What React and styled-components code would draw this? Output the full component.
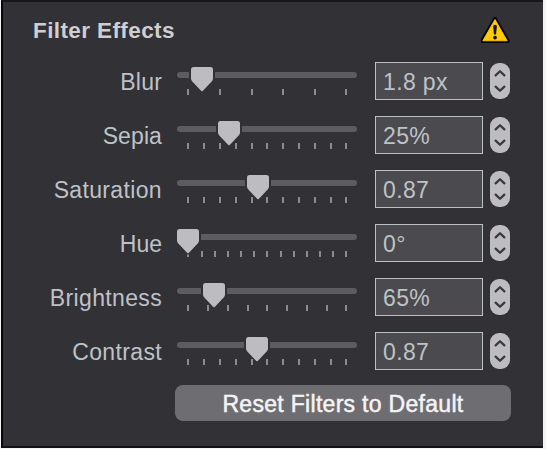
import React from "react";
import styled, { createGlobalStyle } from "styled-components";

const GlobalStyle = createGlobalStyle`
  * { box-sizing: border-box; }
  body { margin: 0; background: #f4f3f4; }
`;

const Panel = styled.section`
  width: 542px;
  height: 448px;
  margin-left: 1px;
  padding: 0 32px 0 30px;
  border: solid #08080c;
  border-width: 2px 0 2px 2px;
  border-top-color: #18171a;
  border-bottom-color: #131214;
  background: #323136;
  font: 23px/26px "Liberation Sans", Arial, sans-serif;
  color: #bec2c7;
`;

const Header = styled.header`
  display: flex;
  justify-content: space-between;
  height: 52px;
  padding-top: 14px;
`;

const Title = styled.h2`
  margin: 2px 0 0;
  font-size: 22.5px;
  line-height: 26px;
  letter-spacing: 0.4px;
  color: #cfcfd1;
`;

const WarningIcon = styled.svg`
  width: 30px;
  height: 28px;
`;

const Row = styled.div`
  display: grid;
  grid-template-columns: 130px 180px 108px 20px;
  align-items: center;
  height: 54px;
`;

const Label = styled.label`
  margin: 2px 1px 0 0;
  text-align: right;
  letter-spacing: ${(p) => p.$tracking}px;
`;

const Slider = styled.svg`
  display: block;
  width: 180px;
  height: 38px;
  margin-left: 14px;
`;

const Field = styled.div`
  height: 38px;
  width: 108px;
  margin-left: 32px;
  padding: 6px 0 0 7px;
  border: 1px solid #bbc0c5;
  background: #4b4a4e;
  letter-spacing: 0.35px;
  white-space: pre;
`;

const Stepper = styled.svg`
  width: 20px;
  height: 36px;
  margin-left: 39px;
`;

const ResetButton = styled.button`
  display: block;
  width: 336px;
  height: 36px;
  margin: 7px 0 0 142px;
  padding: 2px 0 0;
  border: 0;
  border-radius: 8px;
  background: #6e6d71;
  color: #f4f4f6;
  font: inherit;
  letter-spacing: 0.3px;
  -webkit-text-stroke: 0.5px #f4f4f6;
`;

const filters = [
  { name: "Blur", value: "1.8 px", thumb: 25, steps: 5, tracking: 0.2 },
  { name: "Sepia", value: "25%", thumb: 52, steps: 10, tracking: 0.1 },
  { name: "Saturation", value: "0.87", thumb: 81, steps: 10, tracking: 0.35 },
  { name: "Hue", value: "0°", thumb: 11, steps: 12, tracking: 0 },
  { name: "Brightness", value: "65%", thumb: 37, steps: 8, tracking: 0.35 },
  { name: "Contrast", value: "0.87", thumb: 80, steps: 10, tracking: 0.35 },
];

function FilterSlider({ thumb, steps }) {
  const ticks = Array.from({ length: steps + 1 }, (_, i) => 10 + Math.ceil((158 * i) / steps));
  const pin = "M-8.5 0H8.5Q11 0 11 2.5V11.2Q11 13 9.7 14.5L0.7 24Q0 24.7-0.7 24L-9.7 14.5Q-11 13-11 11.2V2.5Q-11 0-8.5 0Z";
  return (
    <Slider viewBox="0 0 180 38">
      <rect y="10" width="180" height="6" rx="3" fill="#5d5c60" />
      {ticks.map((x) => (
        <rect key={x} x={x} y="27" width="2" height="6" fill="#8c8b90" />
      ))}
      <rect x={thumb - 13} y="8" width="26" height="10" fill="#323136" />
      <g transform={`translate(${thumb} 5)`}>
        <path d={pin} fill="#bdbcc1" stroke="#323136" strokeWidth="2.5" />
        <path d={pin} fill="#bdbcc1" />
      </g>
    </Slider>
  );
}

function FilterRow({ filter }) {
  return (
    <Row>
      <Label $tracking={filter.tracking}>{filter.name}</Label>
      <FilterSlider thumb={filter.thumb} steps={filter.steps} />
      <Field>{filter.value}</Field>
      <Stepper viewBox="0 0 20 36">
        <rect width="20" height="36" rx="9" fill="#bdbcc1" />
        <path d="M5.6 12.4L10 8.2L14.4 12.4M5.6 23.6L10 27.8L14.4 23.6" fill="none" stroke="#38373c" strokeWidth="2.2" strokeLinecap="round" strokeLinejoin="round" />
      </Stepper>
    </Row>
  );
}

export default function App() {
  return (
    <>
      <GlobalStyle />
      <Panel>
        <Header>
          <Title>Filter Effects</Title>
          <WarningIcon viewBox="0 0 30 28">
            <path d="M14 3.1L26.7 25H1.3Z" fill="#050509" stroke="#050509" strokeWidth="4" strokeLinejoin="round" />
            <path d="M14 3.5L26.2 24.8H1.8Z" fill="#ffcb05" stroke="#ffcb05" strokeWidth="0.9" strokeLinejoin="round" />
            <path d="M12.1 10.4Q12.1 8.8 14 8.8T15.9 10.4L15 18.4H13Z" fill="#17140a" />
            <circle cx="14" cy="21.6" r="1.9" fill="#17140a" />
          </WarningIcon>
        </Header>
        {filters.map((filter) => (
          <FilterRow key={filter.name} filter={filter} />
        ))}
        <ResetButton>Reset Filters to Default</ResetButton>
      </Panel>
    </>
  );
}
